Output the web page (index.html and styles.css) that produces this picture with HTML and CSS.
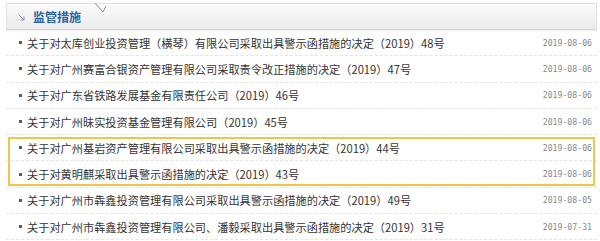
FILE: index.html
```html
<!DOCTYPE html>
<html lang="zh-CN">
<head>
    <meta charset="UTF-8">
    <title>监管措施</title>
    <link rel="stylesheet" href="styles.css">
</head>
<body>
    <div class="panel">
        <div class="panel-head">
            <svg class="head-icon" width="7" height="7" viewBox="0 0 7 7">
                <path d="M0.5 0.5 L6 6 M6 2.5 L6 6 L2.5 6" fill="none" stroke="#8a9bb0" stroke-width="1"/>
            </svg>
            <span class="head-title">监管措施</span>
            <svg class="head-notch" width="14" height="11" viewBox="0 0 14 11">
                <path d="M0 0 L8 9 L11 3" fill="none" stroke="#8c8c8c" stroke-width="1"/>
            </svg>
        </div>
        <ul class="news-list">
            <li class="news-item"><span class="news-title">关于对太库创业投资管理（横琴）有限公司采取出具警示函措施的决定（2019）48号</span><span class="news-date">2019-08-06</span></li>
            <li class="news-item"><span class="news-title">关于对广州赛富合银资产管理有限公司采取责令改正措施的决定（2019）47号</span><span class="news-date">2019-08-06</span></li>
            <li class="news-item"><span class="news-title">关于对广东省铁路发展基金有限责任公司（2019）46号</span><span class="news-date">2019-08-06</span></li>
            <li class="news-item"><span class="news-title">关于对广州昧实投资基金管理有限公司（2019）45号</span><span class="news-date">2019-08-06</span></li>
            <li class="news-group">
                <ul class="news-list">
                    <li class="news-item"><span class="news-title">关于对广州基岩资产管理有限公司采取出具警示函措施的决定（2019）44号</span><span class="news-date">2019-08-06</span></li>
                    <li class="news-item"><span class="news-title">关于对黄明麒采取出具警示函措施的决定（2019）43号</span><span class="news-date">2019-08-06</span></li>
                </ul>
            </li>
            <li class="news-item"><span class="news-title">关于对广州市犇鑫投资管理有限公司采取出具警示函措施的决定（2019）49号</span><span class="news-date">2019-08-05</span></li>
            <li class="news-item"><span class="news-title">关于对广州市犇鑫投资管理有限公司、潘毅采取出具警示函措施的决定（2019）31号</span><span class="news-date">2019-07-31</span></li>
        </ul>
    </div>
</body>
</html>
```

FILE: styles.css
```css
body, html {
    margin: 0;
    padding: 0;
    background: #fff;
}
.panel {
    padding: 3px 3px 0 6px;
    font-family: "Noto Sans CJK SC", "Liberation Sans", sans-serif;
}
.panel-head {
    height: 27px;
    display: flex;
    align-items: center;
    border: 1px solid #e2e2e2;
    border-bottom-color: #d4d4d4;
    background: linear-gradient(to bottom, #fbfbfb, #ebebeb);
    box-shadow: 0 1px 1px rgba(0, 0, 0, 0.06);
    box-sizing: border-box;
    padding-left: 11px;
}
.head-icon {
    margin-top: 2px;
}
.head-title {
    margin-left: 8px;
    font-size: 12px;
    font-weight: bold;
    color: #2d63a6;
}
.head-notch {
    align-self: flex-start;
    margin-left: 14px;
    margin-top: -1px;
}
.news-list {
    list-style: none;
    margin: 0;
    padding: 0;
}
.news-item {
    display: flex;
    align-items: center;
    height: 25.3px;
    border-bottom: 1px dashed #e4e4e4;
    padding: 0 5px 0 13px;
}
.news-item::before {
    content: "";
    width: 3px;
    height: 3px;
    background: #5a5a5a;
    margin-right: 5px;
    flex: none;
}
.news-title {
    flex: 1;
    font-size: 11.2px;
    color: #353535;
    white-space: nowrap;
}
.news-date {
    font-family: "DejaVu Sans Mono", monospace;
    font-size: 8.2px;
    color: #888;
}
.news-group {
    outline: 2px solid #f2c548;
    outline-offset: -4px;
}
```
